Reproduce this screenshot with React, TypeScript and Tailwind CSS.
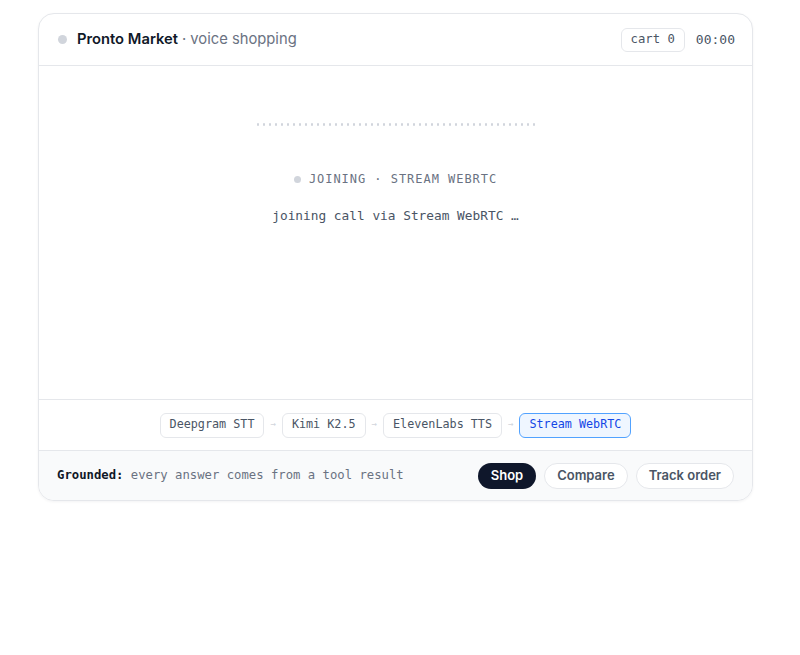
import { Fragment } from 'react';

const sans = { fontFamily: 'Inter, "Noto Sans", sans-serif' };
const mono = { fontFamily: '"DejaVu Sans Mono", "Liberation Mono", monospace' };

const stages = [
  { name: 'Deepgram STT', active: false },
  { name: 'Kimi K2.5', active: false },
  { name: 'ElevenLabs TTS', active: false },
  { name: 'Stream WebRTC', active: true },
];

const bars = Array.from({ length: 47 });

export default function App() {
  return (
    <div className="min-h-[655px] w-[800px] bg-white pt-[13px] pl-[38px]" style={sans}>
      <div className="w-[715px] overflow-hidden rounded-[16px] border border-gray-200 bg-white shadow-[0_1px_3px_rgba(15,23,42,0.05)]">
        {/* header */}
        <div className="flex h-[52px] items-center justify-between border-b border-gray-200 pl-[19px] pr-[17px]">
          <div className="flex items-center">
            <span className="h-[9px] w-[9px] rounded-full bg-gray-300" />
            <span className="ml-[10px] text-[14.75px] font-semibold text-gray-900">Pronto Market</span>
            <span className="ml-[4px] text-[14.75px] text-gray-500">· voice shopping</span>
          </div>
          <div className="flex items-center gap-[11px]" style={mono}>
            <span className="flex h-[24px] items-center rounded-md border border-gray-200 px-[9px] text-[12.25px] text-gray-600">
              cart 0
            </span>
            <span className="text-[13px] font-medium text-gray-600">00:00</span>
          </div>
        </div>

        {/* call status */}
        <div className="flex h-[333px] flex-col items-center pt-[57px]">
          <div className="flex h-[3px] items-center gap-[4px]">
            {bars.map((_, i) => (
              <span key={i} className="h-[3px] w-[2px] rounded-[1px] bg-gray-300" />
            ))}
          </div>
          <div
            className="mt-[44px] flex items-center text-[12px] uppercase tracking-[0.08em] text-gray-500"
            style={mono}
          >
            <span className="mr-[8px] h-[7px] w-[7px] rounded-full bg-gray-300" />
            Joining · Stream WebRTC
          </div>
          <div className="mt-[18px] text-[12.8px] text-gray-600" style={mono}>
            joining call via Stream WebRTC …
          </div>
        </div>

        {/* pipeline */}
        <div className="flex h-[51px] items-center justify-center border-t border-gray-200" style={mono}>
          {stages.map((s, i) => (
            <Fragment key={s.name}>
              {i > 0 && <span className="mx-[6px] text-[9px] text-gray-300">→</span>}
              <span
                className={
                  s.active
                    ? 'flex h-[25px] items-center rounded-md border border-blue-400 bg-blue-50 px-[9px] text-[11.75px] text-blue-700'
                    : 'flex h-[25px] items-center rounded-md border border-gray-200 bg-white px-[9px] text-[11.75px] text-gray-600'
                }
              >
                {s.name}
              </span>
            </Fragment>
          ))}
        </div>

        {/* footer */}
        <div className="flex h-[50px] items-center justify-between border-t border-gray-200 bg-gray-50 pl-[18px] pr-[18px]">
          <div className="text-[12.25px] text-gray-500" style={mono}>
            <span className="font-bold text-gray-900">Grounded:</span> every answer comes from a tool result
          </div>
          <div className="flex items-center gap-[8px]">
            <button className="h-[26px] rounded-full bg-slate-900 px-[13px] text-[13px] font-semibold text-white">
              Shop
            </button>
            <button className="h-[26px] rounded-full border border-gray-200 bg-white px-[12px] text-[13px] font-semibold text-gray-600">
              Compare
            </button>
            <button className="h-[26px] rounded-full border border-gray-200 bg-white px-[12px] text-[13px] font-semibold text-gray-600">
              Track order
            </button>
          </div>
        </div>
      </div>
    </div>
  );
}
